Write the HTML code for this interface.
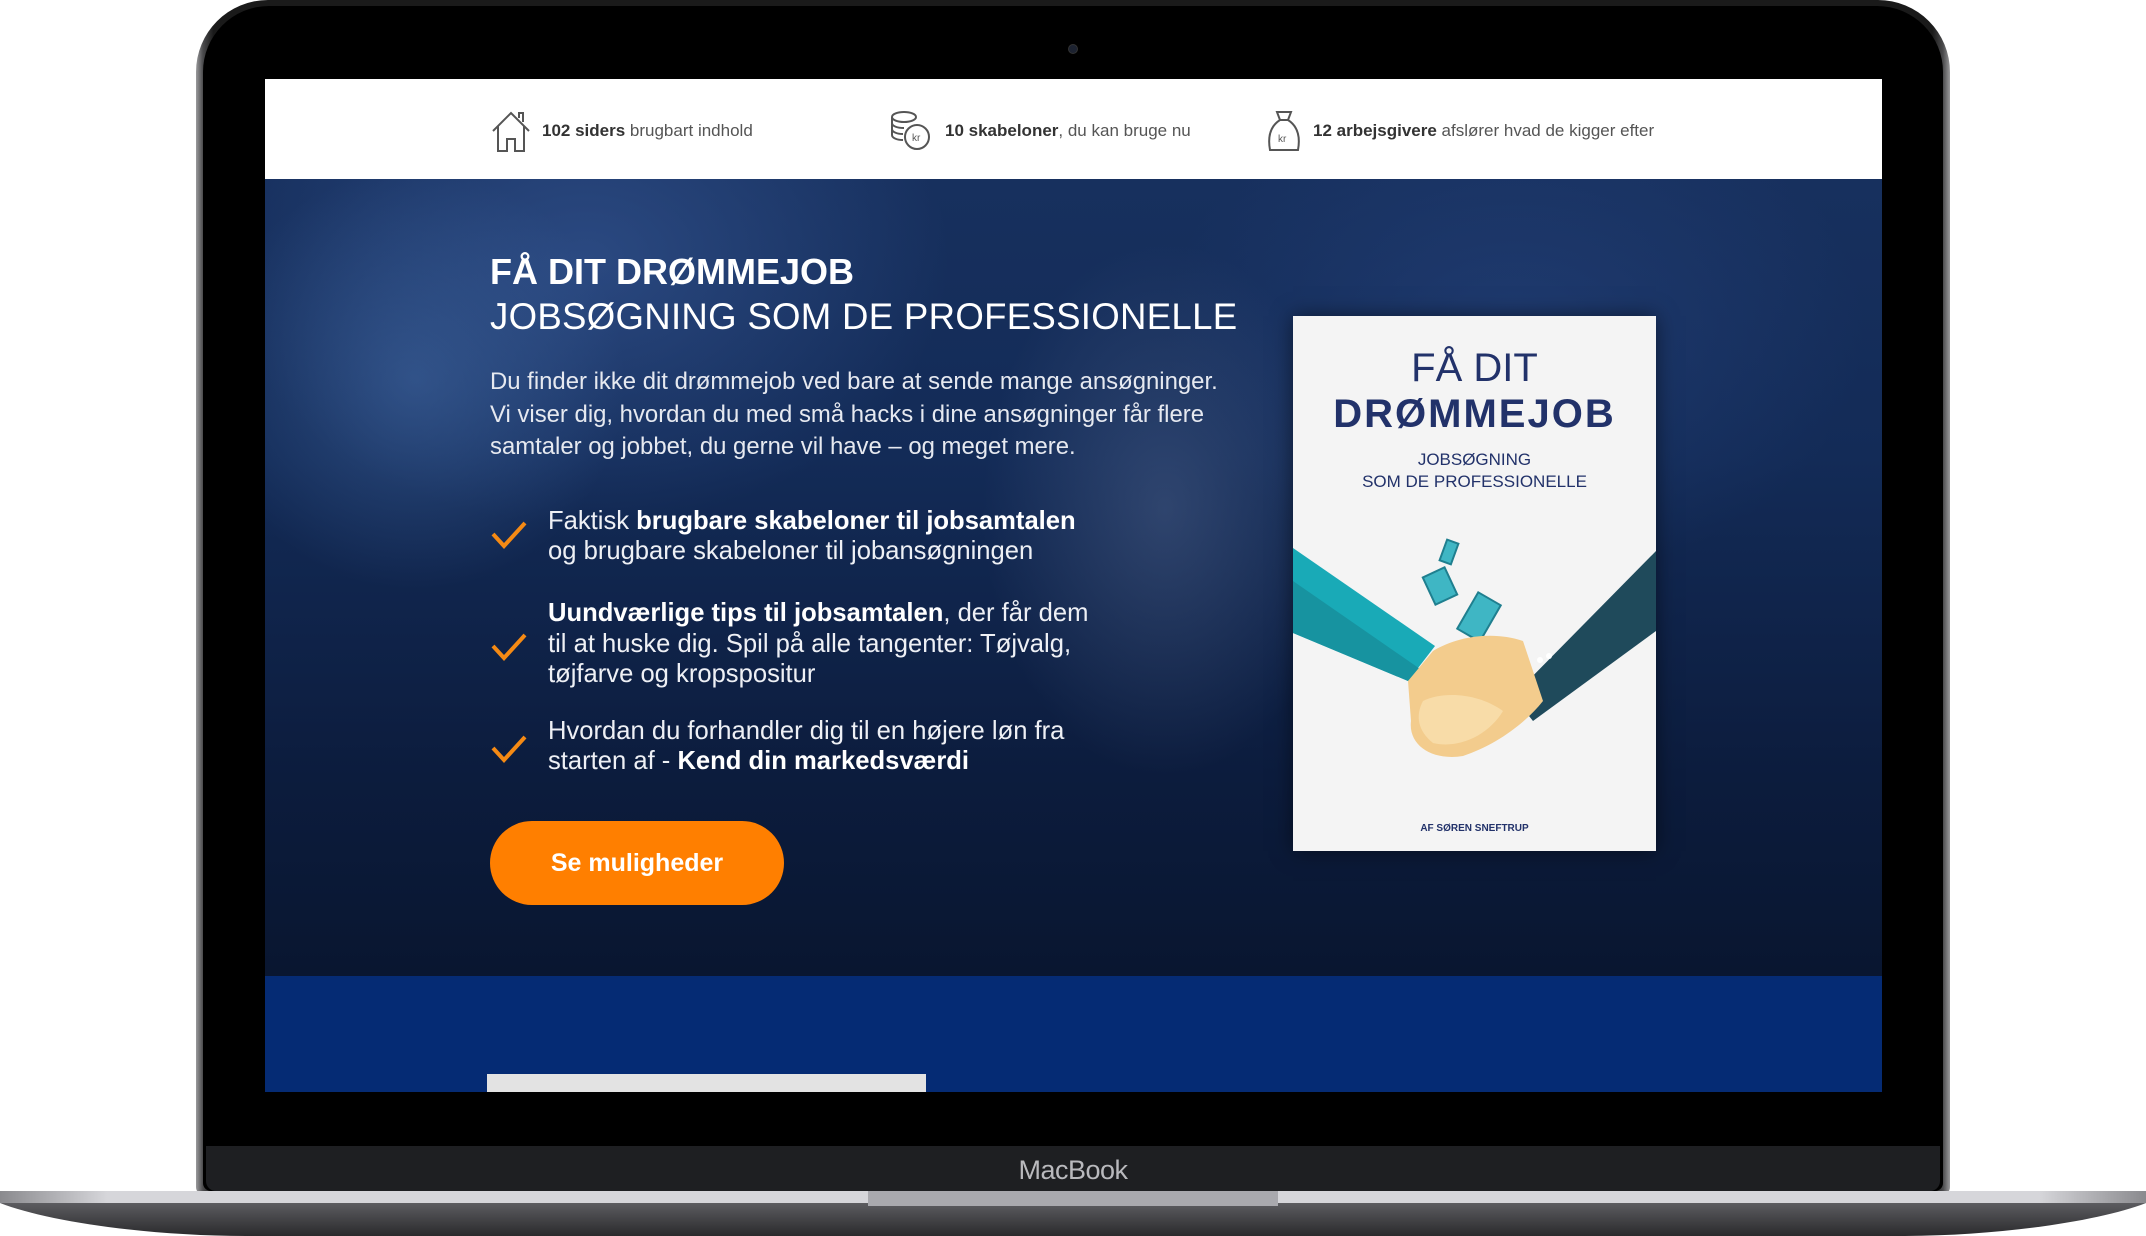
<!DOCTYPE html>
<html><head><meta charset="utf-8"><style>
*{margin:0;padding:0;box-sizing:border-box}
body{width:2146px;height:1236px;background:#fff;position:relative;overflow:hidden;font-family:"Liberation Sans",sans-serif}
.body{position:absolute;left:196px;top:0;width:1754px;height:1195px;border-radius:72px 72px 8px 8px;background:linear-gradient(90deg,#9a9a9c,#4a4a4c 0.4%,#1a1a1a 1%,#1a1a1a 99%,#4a4a4c 99.6%,#9a9a9c);}
.bezel{position:absolute;left:203px;top:6px;width:1740px;height:1185px;border-radius:66px 66px 8px 8px;background:#000}
.chin{position:absolute;left:206px;top:1146px;width:1734px;height:45px;background:#1e1f22;border-radius:0 0 10px 10px}
.mac{position:absolute;left:0;width:2146px;top:1155px;text-align:center;color:#b9b9bd;font-size:27px;letter-spacing:-0.5px}
.base{position:absolute;left:0;top:1191px;width:2146px;height:45px}
.screen{position:absolute;left:265px;top:79px;width:1617px;height:1013px;overflow:hidden;background:#0c1a38}
.top{position:absolute;left:0;top:0;width:1617px;height:100px;background:#fff}
.ti{position:absolute;top:30px;font-size:17px;color:#555;white-space:nowrap;display:flex;align-items:center;gap:10px}
.ti b{color:#333}
.hero{position:absolute;left:0;top:100px;width:1617px;height:797px;
background:radial-gradient(ellipse 260px 380px at 900px 330px,rgba(90,110,150,.4),transparent 70%),radial-gradient(ellipse 300px 300px at 150px 200px,rgba(70,110,170,.5),transparent 70%),radial-gradient(ellipse 520px 380px at 320px 80px,rgba(60,95,160,.55),transparent 70%),radial-gradient(ellipse 500px 360px at 1250px 150px,rgba(40,70,130,.5),transparent 70%),linear-gradient(180deg,#17305e 0%,#132b57 35%,#0c1c3d 75%,#091630 100%)}
.band{position:absolute;left:0;top:897px;width:1617px;height:116px;background:#052b74}
.wbox{position:absolute;left:222px;top:995px;width:439px;height:30px;background:#e3e3e3}
h1{position:absolute;left:225px;top:71px;color:#fff;font-size:36px;font-weight:bold;line-height:44px}
h2{position:absolute;left:225px;top:116px;color:#fff;font-size:36.6px;font-weight:normal;line-height:44px;letter-spacing:.3px}
.p{position:absolute;left:225px;top:187px;color:#e6e9f0;font-size:23.9px;line-height:32.5px;width:900px}
.li{position:absolute;left:283px;color:#eef0f5;font-size:25.6px;line-height:30px;white-space:nowrap}
.li b{color:#fff}
.ck{position:absolute;left:225px}
.btn{position:absolute;left:225px;top:642px;width:294px;height:84px;border-radius:42px;background:#ff7f00;color:#fff;font-weight:bold;font-size:25px;line-height:84px;text-align:center}
.book{position:absolute;left:1028px;top:137px;width:363px;height:535px;background:#f4f4f4;box-shadow:0 0 20px rgba(0,0,0,.5);overflow:hidden}
.book div{position:absolute;left:0;width:100%;text-align:center;color:#22326a}
</style></head><body>
<div class="body"></div><div class="bezel"></div>
<div style="position:absolute;left:1068px;top:44px;width:10px;height:10px;border-radius:50%;background:#1c2230;border:1px solid #333"></div>
<div class="screen">
 <div class="top">
  <div class="ti" style="left:225px"><svg width="42" height="44" viewBox="0 0 42 44" fill="none" stroke="#555" stroke-width="2"><path d="M3 22 L21 4 L39 22 M8 17 V42 H17 V30 H25 V42 H34 V17 M29 9 V4 H33 V13"/></svg><span><b>102 siders</b> brugbart indhold</span></div>
  <div class="ti" style="left:622px"><svg width="48" height="44" viewBox="0 0 48 44" fill="none" stroke="#555" stroke-width="2"><ellipse cx="17" cy="8" rx="12" ry="5"/><path d="M5 8v6c0 3 5 5 12 5M5 14v6c0 3 5 5 11 5M5 20v6c0 3 5 5 11 5"/><circle cx="30" cy="28" r="12"/><text x="25" y="32" font-size="10" fill="#555" stroke="none" font-family="Liberation Sans">kr</text></svg><span><b>10 skabeloner</b>, du kan bruge nu</span></div>
  <div class="ti" style="left:1000px"><svg width="38" height="44" viewBox="0 0 38 44" fill="none" stroke="#555" stroke-width="2"><path d="M12 3h14l-3 8h-8z M15 11 C4 18 3 30 5 41 H33 C35 30 34 18 23 11"/><text x="13" y="33" font-size="10" fill="#555" stroke="none" font-family="Liberation Sans">kr</text></svg><span><b>12 arbejsgivere</b> afslører hvad de kigger efter</span></div>
 </div>
 <div class="hero">
  <h1>FÅ DIT DRØMMEJOB</h1>
  <h2>JOBSØGNING SOM DE PROFESSIONELLE</h2>
  <div class="p">Du finder ikke dit drømmejob ved bare at sende mange ansøgninger.<br>Vi viser dig, hvordan du med små hacks i dine ansøgninger får flere<br>samtaler og jobbet, du gerne vil have – og meget mere.</div>
  <svg class="ck" style="top:341px" width="38" height="30"><path d="M3 14 L14 26 L35 3" stroke="#f58a14" stroke-width="4" fill="none"/></svg>
  <div class="li" style="top:327px">Faktisk <b>brugbare skabeloner til jobsamtalen</b><br>og brugbare skabeloner til jobansøgningen</div>
  <svg class="ck" style="top:453px" width="38" height="30"><path d="M3 14 L14 26 L35 3" stroke="#f58a14" stroke-width="4" fill="none"/></svg>
  <div class="li" style="top:419px;line-height:30.5px"><b>Uundværlige tips til jobsamtalen</b>, der får dem<br>til at huske dig. Spil på alle tangenter: Tøjvalg,<br>tøjfarve og kropspositur</div>
  <svg class="ck" style="top:555px" width="38" height="30"><path d="M3 14 L14 26 L35 3" stroke="#f58a14" stroke-width="4" fill="none"/></svg>
  <div class="li" style="top:537px">Hvordan du forhandler dig til en højere løn fra<br>starten af - <b>Kend din markedsværdi</b></div>
  <div class="btn">Se muligheder</div>
  <div class="book">
   <div style="top:30px;font-size:40px">FÅ DIT</div>
   <div style="top:76px;font-size:40px;font-weight:bold;letter-spacing:2px">DRØMMEJOB</div>
   <div style="top:133px;font-size:17px;line-height:22px">JOBSØGNING<br>SOM DE PROFESSIONELLE</div>
   <svg style="position:absolute;left:0;top:205px" width="363" height="280" viewBox="0 0 363 280">
    <g fill="#3fb6c4" stroke="#1f7f8f" stroke-width="2"><rect x="150" y="20" width="12" height="22" transform="rotate(20 156 31)"/><rect x="135" y="50" width="24" height="30" transform="rotate(-25 147 65)"/><rect x="173" y="75" width="26" height="42" transform="rotate(30 186 96)"/></g>
    <polygon points="0,27 142,125 115,160 0,112" fill="#19aab7"/>
    <polygon points="0,60 130,150 115,160 0,112" fill="#1793a0"/>
    <polygon points="363,30 363,110 240,200 220,175" fill="#1f4a5b"/>
    <path d="M115 160 L140 130 C165 115 200 110 230 120 L250 180 C230 205 200 225 170 235 C140 240 115 225 118 200 Z" fill="#f3cc8d"/>
    <path d="M130 180 C150 170 185 172 210 190 C195 215 165 228 140 222 C125 210 122 195 130 180Z" fill="#f8dca8"/>
    <circle cx="247" cy="139" r="3" fill="#fff"/><circle cx="256" cy="135" r="3" fill="#fff"/>
   </svg>
   <div style="top:507px;font-size:10px;font-weight:bold">AF SØREN SNEFTRUP</div>
  </div>
 </div>
 <div class="band"></div>
 <div class="wbox"></div>
</div>
<div class="chin"></div>
<div class="mac">MacBook</div>
<svg class="base" viewBox="0 0 2146 45" preserveAspectRatio="none">
 <defs><linearGradient id="g" x1="0" y1="0" x2="0" y2="1"><stop offset="0" stop-color="#7a7a7e"/><stop offset=".3" stop-color="#5a5a5e"/><stop offset="1" stop-color="#2a2a2c"/></linearGradient>
 <linearGradient id="s" x1="0" x2="1"><stop offset="0" stop-color="#8a8a8e"/><stop offset=".05" stop-color="#d6d6da"/><stop offset=".95" stop-color="#d6d6da"/><stop offset="1" stop-color="#8a8a8e"/></linearGradient></defs>
 <path d="M0 0 H2146 V12 C2100 30 2000 45 1900 45 H246 C146 45 46 30 0 12Z" fill="url(#g)"/>
 <rect x="0" y="0" width="2146" height="12" fill="url(#s)"/>
 <rect x="868" y="0" width="410" height="15" fill="#a9a9ae"/>
</svg>
</body></html>
